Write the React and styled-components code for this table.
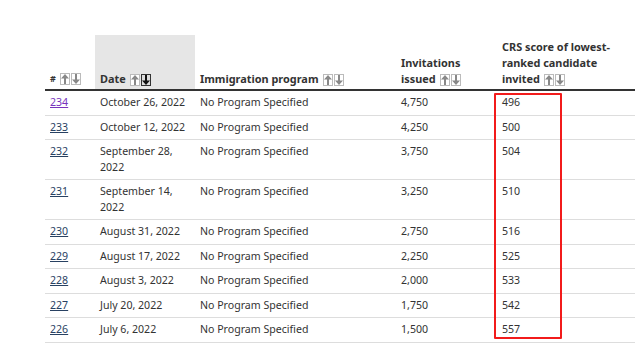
import React from "react";
import styled, { createGlobalStyle } from "styled-components";

const Global = createGlobalStyle`
  body {
    margin: 0;
    background: #fff;
    font-family: "Noto Sans", "Open Sans", sans-serif;
    color: #333;
  }
`;

const Page = styled.div`
  position: relative;
  padding: 35px 0 0 45px;
  width: 635px;
  height: 360px;
  box-sizing: border-box;
  overflow: hidden;
`;

const Table = styled.table`
  border-collapse: collapse;
  width: 600px;
  table-layout: fixed;
  font-size: 10.6px;
  line-height: 15.5px;
`;

const Th = styled.th`
  box-sizing: border-box;
  text-align: left;
  vertical-align: bottom;
  font-weight: bold;
  padding: 4px 5px 2px;
  line-height: 16px;
  font-size: 10.9px;
  border-bottom: 2px solid #333;
  background: ${(p) => (p.$active ? "#e6e6e6" : "transparent")};
  width: ${(p) => p.$w}px;
`;

const Wrap = styled.span`
  display: block;
  max-width: ${(p) => p.$max}px;
`;

const Hash = styled.span`
  font-size: 9px;
`;

const Td = styled.td`
  vertical-align: top;
  padding: 4px 5px 4px;
  border-bottom: 1px solid #ddd;
`;

const Link = styled.a`
  color: ${(p) => (p.$visited ? "#7834bc" : "#284162")};
  text-decoration: underline;
`;

const Sorts = styled.span`
  display: inline-flex;
  gap: 1px;
  margin-left: 4px;
  vertical-align: -2px;
  line-height: 0;
`;

const SortBtn = styled.span`
  display: inline-flex;
  align-items: center;
  justify-content: center;
  width: 10px;
  height: 12px;
  box-sizing: border-box;
  border: 1px solid ${(p) => (p.$on ? "#333" : "#bbb")};
  background: ${(p) => (p.$on ? "#ddd" : "#fff")};
`;

const Highlight = styled.div`
  position: absolute;
  left: 494px;
  top: 93px;
  width: 68px;
  height: 246px;
  border: 2px solid #f21b1b;
  box-sizing: border-box;
  border-radius: 1px;
  pointer-events: none;
`;

const Arrow = ({ down, on }) => (
  <svg width="8" height="10" viewBox="0 0 8 10">
    <g transform={down ? "rotate(180 4 5)" : undefined} fill={on ? "#111" : "#888"}>
      <polygon points="4,0 8,4.5 5,4.5 5,10 3,10 3,4.5 0,4.5" />
    </g>
  </svg>
);

const Sort = ({ active }) => (
  <Sorts>
    <SortBtn>
      <Arrow />
    </SortBtn>
    <SortBtn $on={active}>
      <Arrow down on={active} />
    </SortBtn>
  </Sorts>
);

const rows = [
  ["234", "October 26, 2022", "4,750", "496", true],
  ["233", "October 12, 2022", "4,250", "500"],
  ["232", "September 28, 2022", "3,750", "504"],
  ["231", "September 14, 2022", "3,250", "510"],
  ["230", "August 31, 2022", "2,750", "516"],
  ["229", "August 17, 2022", "2,250", "525"],
  ["228", "August 3, 2022", "2,000", "533"],
  ["227", "July 20, 2022", "1,750", "542"],
  ["226", "July 6, 2022", "1,500", "557"],
];

export default function App() {
  return (
    <Page>
      <Global />
      <Table>
        <thead>
          <tr>
            <Th $w={50}>
              <Hash>#</Hash>
              <Sort />
            </Th>
            <Th $w={100} $active>
              Date
              <Sort active />
            </Th>
            <Th $w={201}>
              Immigration program
              <Sort />
            </Th>
            <Th $w={101}>
              Invitations issued
              <Sort />
            </Th>
            <Th $w={148}>
              <Wrap $max={124}>
                CRS score of lowest-ranked candidate invited
                <Sort />
              </Wrap>
            </Th>
          </tr>
        </thead>
        <tbody>
          {rows.map(([n, date, inv, crs, visited]) => (
            <tr key={n}>
              <Td>
                <Link href="#" $visited={visited}>
                  {n}
                </Link>
              </Td>
              <Td>{date}</Td>
              <Td>No Program Specified</Td>
              <Td>{inv}</Td>
              <Td>{crs}</Td>
            </tr>
          ))}
        </tbody>
      </Table>
      <Highlight />
    </Page>
  );
}
